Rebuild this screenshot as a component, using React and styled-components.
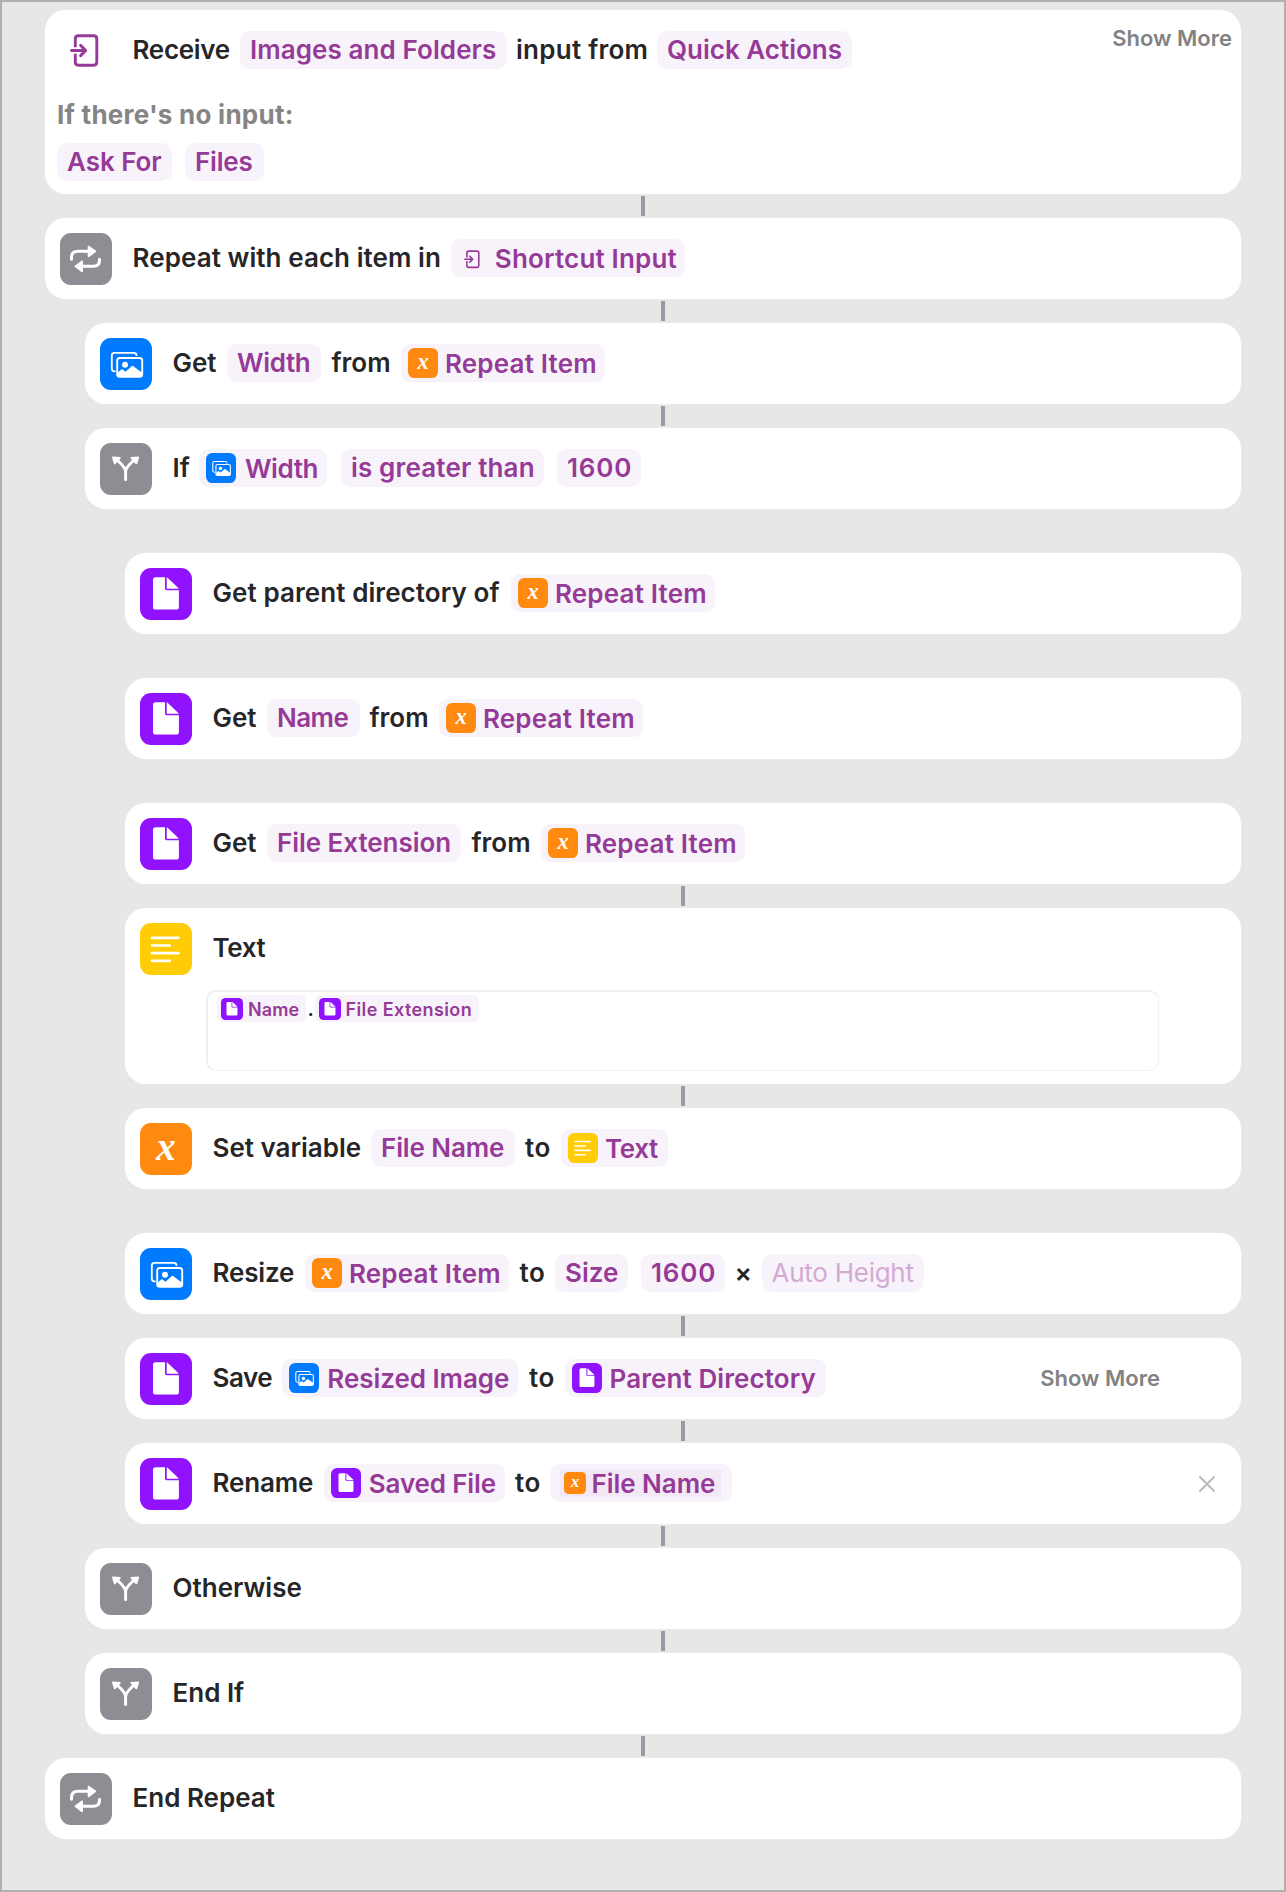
import React from 'react';
import styled, { createGlobalStyle, css } from 'styled-components';

const GlobalStyle = createGlobalStyle`
  *, *::before, *::after { box-sizing: border-box; }
  body { margin: 0; background: #e8e7e5; font-family: Inter, "Liberation Sans", sans-serif; }
`;

const Frame = styled.main`
  width: 1286px;
  height: 1892px;
  border: 2px solid #b1b0ae;
  background: #e8e7e5;
  padding: 8px 43px 0;
  display: flex;
  flex-direction: column;
  overflow: hidden;
`;

const Card = styled.section`
  flex: none;
  height: ${(p) => p.$h || 81}px;
  margin-left: ${(p) => p.$level * 40}px;
  background: #fff;
  border-radius: 21px;
  box-shadow: 0 0 0 1px rgba(255, 255, 255, 0.2), 0 1px 12px rgba(0, 0, 0, 0.015);
`;

const Gap = styled.div`
  flex: none;
  height: ${(p) => (p.$line ? 24 : 44)}px;
  margin-left: ${(p) => p.$level * 40}px;
  display: flex;
  justify-content: center;
  align-items: center;
`;

const Line = styled.span`
  width: 4px;
  height: 20px;
  background: #9a9ba2;
  z-index: 1;
`;

const Header = styled.div`
  display: flex;
  align-items: flex-start;
  height: 81px;
  padding-left: 15px;
`;

const tileColors = {
  gray: '#8e8d93',
  blue: '#007aff',
  purple: '#9012ff',
  yellow: '#ffcc05',
  orange: '#ff8a0f',
};

const Tile = styled.span`
  flex: none;
  display: flex;
  justify-content: center;
  align-items: center;
  width: ${(p) => p.$size}px;
  height: ${(p) => p.$size}px;
  border-radius: ${(p) => p.$size * 0.21}px;
  background: ${(p) => tileColors[p.$color] || 'none'};
  svg { display: block; }
`;

const LeadTile = styled.div`
  flex: none;
  width: 72px;
  padding-top: 15px;
`;

const InputBox = styled.div`
  width: 52px;
  height: 52px;
  padding: 9px 0 0 10px;
`;

const XGlyph = styled.span`
  font: italic 700 ${(p) => p.$size * 0.75}px/1 "Liberation Serif", serif;
  color: #fff;
  height: ${(p) => p.$size}px;
  line-height: ${(p) => p.$size * 0.92}px;
`;

const Phrase = styled.div`
  display: flex;
  align-items: flex-start;
  padding-top: 21px;
`;

const Word = styled.span`
  flex: none;
  width: ${(p) => p.$w}px;
  padding-left: ${(p) => (p.$pad || 0) + 0.5}px;
  font-size: 26px;
  line-height: 38px;
  font-weight: 600;
  letter-spacing: ${(p) => p.$ls || 0}px;
  color: #262628;
  white-space: nowrap;
`;

const chipText = css`
  font-size: 26px;
  line-height: 38px;
  font-weight: 600;
  letter-spacing: ${(p) => p.$ls || 0}px;
  color: #963a97;
  white-space: nowrap;
`;

const Chip = styled.span`
  flex: none;
  width: ${(p) => p.$w}px;
  height: 38px;
  margin-left: ${(p) => p.$ml || 0}px;
  padding-left: 10px;
  border-radius: 10px;
  background: #f8f3fa;
  ${chipText}
  ${(p) => p.$placeholder && css`color: #d3aad4; font-weight: 400;`}
`;

const VarChip = styled.span`
  flex: none;
  display: flex;
  align-items: flex-start;
  width: ${(p) => p.$w}px;
  height: 37.5px;
  padding: 4px 0 0 ${(p) => p.$pl || 7}px;
  border-radius: 9px;
  background: #f8f3fa;
`;

const VarText = styled.span`
  margin: -3px 0 0 ${(p) => p.$gap || 7}px;
  ${chipText}
`;

const MiniInput = styled.span`
  flex: none;
  width: 16px;
  padding-top: 7px;
  svg { display: block; }
`;

const Selected = styled.span`
  display: flex;
  align-items: center;
  width: 161px;
  height: 28px;
  margin: 5px 0 0;
  padding-left: 4px;
  border-radius: 2px;
  background: #f3e9f6;
`;

const SelectedText = styled.span`
  margin: 1px 0 0 5.5px;
  ${chipText}
  line-height: 28px;
`;

const ShowMore = styled.span`
  margin: ${(p) => p.$top}px ${(p) => p.$right}px 0 auto;
  font-size: 22px;
  line-height: 26px;
  font-weight: 600;
  color: #828282;
`;

const Close = styled.span`
  margin: 33px 26px 0 auto;
  svg { display: block; }
`;

const Question = styled.div`
  height: 47px;
  padding-left: 12px;
  font-size: 26px;
  font-weight: 700;
  line-height: 48px;
  letter-spacing: 0.25px;
  color: #858585;
`;

const Answers = styled.div`
  display: flex;
  padding: 5px 0 0 12px;
`;

const TextArea = styled.div`
  display: flex;
  align-items: flex-start;
  width: 953px;
  height: 81px;
  margin: 1px 0 0 81px;
  padding: 3px 0 0 9px;
  border: solid #f0f0f0;
  border-width: 2px 1px 1px 2px;
  border-radius: 10px;
`;

const SmallChip = styled.span`
  flex: none;
  display: flex;
  width: ${(p) => p.$w}px;
  height: 26.5px;
  padding: 3px 0 0 4px;
  border-radius: 6px;
  background: #f8f3fa;
`;

const SmallText = styled.span`
  margin: -1px 0 0 ${(p) => p.$gap}px;
  font-size: 18px;
  line-height: 25px;
  font-weight: 600;
  letter-spacing: ${(p) => p.$ls}px;
  color: #963a97;
  white-space: nowrap;
`;

const Dot = styled.span`
  width: 9px;
  padding-left: 1.5px;
  font-size: 20px;
  line-height: 29px;
  font-weight: 600;
  color: #262628;
`;

function InputGlyph({ w, h }) {
  return (
    <svg width={w} height={h} viewBox="0 0 29 33" fill="none" stroke="#963a97" strokeWidth="2.9" strokeLinecap="round" strokeLinejoin="round">
      <path strokeLinecap="butt" d="M5.3 13.2V5Q5.3 1.8 8.3 1.8H23.7Q26.8 1.8 26.8 5V28Q26.8 31.2 23.7 31.2H8.3Q5.3 31.2 5.3 28V19.8" />
      <path d="M1.5 16.5H15.5M10.6 11.4L15.7 16.5L10.6 21.6" />
    </svg>
  );
}

const glyphs = {
  repeat: (
    <>
      <g fill="none" stroke="#fff" strokeWidth="3" strokeLinecap="round">
        <path d="M11.5 26.2V24.5Q11.5 18.3 17.8 18.3H29" />
        <path d="M39.5 26.2V27.2Q39.5 33.3 33.2 33.3H22" />
      </g>
      <path d="M28.7 13.7L35.2 18.3L28.7 23.1ZM22 28.6L15.6 33.3L22 38.1Z" fill="#fff" stroke="#fff" strokeWidth="2" strokeLinejoin="round" />
    </>
  ),
  branch: (
    <>
      <path d="M25.6 36.5V28.5C25.6 24.2 20.5 20.5 17 16.8M25.6 28.5C25.6 24.2 30.7 20.5 34.2 16.8" fill="none" stroke="#fff" strokeWidth="3" strokeLinecap="round" />
      <path d="M13 14.4L19.8 14.8L14.8 20.4ZM38.2 14.4L31.4 14.8L36.4 20.4Z" fill="#fff" stroke="#fff" strokeWidth="1.8" strokeLinejoin="round" />
    </>
  ),
  photos: (
    <>
      <path d="M14.8 33.3H14.3Q11.8 33.3 11.8 30.5V17.5Q11.8 14.8 14.5 14.8H33.6Q36.4 14.8 36.5 17.2" fill="none" stroke="#fff" strokeWidth="1.8" strokeLinecap="round" />
      <rect x="17.2" y="20" width="25" height="18.9" rx="2.6" fill="none" stroke="#fff" strokeWidth="1.9" />
      <circle cx="25" cy="26.7" r="3" fill="#fff" />
      <path d="M17.2 35L21.3 31.5Q22 31 22.7 31.5L25.5 33.8L31.6 28.2Q32.5 27.5 33.4 28.2L42.2 34.8V37Q42.2 38.9 40 38.9H19.4Q17.2 38.9 17.2 37Z" fill="#fff" />
    </>
  ),
  doc: (
    <>
      <path d="M15.7 9.2H25V20.6Q25 22.3 26.7 22.3H38.9V38.9Q38.9 41.6 36.2 41.6H15.7Q13 41.6 13 38.9V11.9Q13 9.2 15.7 9.2Z" fill="#fff" />
      <path d="M26.7 9.3Q27.5 9.6 28.1 10.3L37.8 19.4Q38.5 20.1 38.7 20.8H27.3Q26.7 20.8 26.7 20.2Z" fill="#fff" />
    </>
  ),
  text: (
    <path d="M12 14.8H38.4M12 22.5H29.8M12 30.1H38.4M12 37.8H29.8" stroke="#fff" strokeWidth="2.7" strokeLinecap="round" />
  ),
};

const glyphColors = { repeat: 'gray', branch: 'gray', photos: 'blue', doc: 'purple', text: 'yellow', x: 'orange' };

function Icon({ name, size = 52 }) {
  return (
    <Tile $size={size} $color={glyphColors[name]}>
      {name === 'x' ? (
        <XGlyph $size={size}>x</XGlyph>
      ) : (
        <svg width={size} height={size} viewBox="0 0 52 52">{glyphs[name]}</svg>
      )}
    </Tile>
  );
}

function Variable({ icon, w, ls, gap, children }) {
  return (
    <VarChip $w={w}>
      <Icon name={icon} size={30} />
      <VarText $ls={ls} $gap={gap}>{children}</VarText>
    </VarChip>
  );
}

const RepeatItem = () => <Variable icon="x" w={204} ls={0.18}>Repeat Item</Variable>;

function Action({ icon, level, h, extra, below, children }) {
  return (
    <Card $level={level} $h={h}>
      <Header>
        <LeadTile><Icon name={icon} /></LeadTile>
        <Phrase>{children}</Phrase>
        {extra}
      </Header>
      {below}
    </Card>
  );
}

const Link = ({ level }) => <Gap $line $level={level}><Line /></Gap>;

export default function App() {
  return (
    <>
      <GlobalStyle />
      <Frame>
        <Card $level={0} $h={184}>
          <Header>
            <LeadTile><InputBox><InputGlyph w={29} h={33} /></InputBox></LeadTile>
            <Phrase>
              <Word $w={108} $ls={-0.3}>Receive</Word>
              <Chip $w={266.5} $ls={0.08}>Images and Folders</Chip>
              <Word $w={150.5} $pad={9} $ls={0.26}>input from</Word>
              <Chip $w={194.8}>Quick Actions</Chip>
            </Phrase>
            <ShowMore $top={15} $right={9}>Show More</ShowMore>
          </Header>
          <Question>If there's no input:</Question>
          <Answers>
            <Chip $w={115} $ls={-0.05}>Ask For</Chip>
            <Chip $w={78.5} $ml={13} $ls={-0.2}>Files</Chip>
          </Answers>
        </Card>
        <Link level={0} />
        <Action icon="repeat" level={0}>
          <Word $w={319} $ls={0.07}>Repeat with each item in</Word>
          <VarChip $w={234.3} $pl={13}>
            <MiniInput><InputGlyph w={16} h={18.5} /></MiniInput>
            <VarText $gap={14.8} $ls={0.18}>Shortcut Input</VarText>
          </VarChip>
        </Action>
        <Link level={1} />
        <Action icon="photos" level={1}>
          <Word $w={55}>Get</Word>
          <Chip $w={94} $ls={-0.35}>Width</Chip>
          <Word $w={80} $pad={10}>from</Word>
          <RepeatItem />
        </Action>
        <Link level={1} />
        <Action icon="branch" level={1}>
          <Word $w={27}>If</Word>
          <Variable icon="photos" w={128} ls={-0.4} gap={9}>Width</Variable>
          <Chip $w={203} $ml={14} $ls={0.16}>is greater than</Chip>
          <Chip $w={84} $ml={13} $ls={0.8}>1600</Chip>
        </Action>
        <Gap />
        <Action icon="doc" level={2}>
          <Word $w={299} $ls={0.08}>Get parent directory of</Word>
          <RepeatItem />
        </Action>
        <Gap />
        <Action icon="doc" level={2}>
          <Word $w={55}>Get</Word>
          <Chip $w={92.5} $ls={-0.55}>Name</Chip>
          <Word $w={79.5} $pad={9.5}>from</Word>
          <RepeatItem />
        </Action>
        <Gap />
        <Action icon="doc" level={2}>
          <Word $w={55}>Get</Word>
          <Chip $w={194} $ls={-0.05}>File Extension</Chip>
          <Word $w={80} $pad={10}>from</Word>
          <RepeatItem />
        </Action>
        <Link level={2} />
        <Action
          icon="text"
          level={2}
          h={176}
          below={
            <TextArea>
              <SmallChip $w={89}>
                <Icon name="doc" size={22} />
                <SmallText $gap={5} $ls={0.1}>Name</SmallText>
              </SmallChip>
              <Dot>.</Dot>
              <SmallChip $w={164}>
                <Icon name="doc" size={22} />
                <SmallText $gap={4.5} $ls={0.4}>File Extension</SmallText>
              </SmallChip>
            </TextArea>
          }
        >
          <Word $w={60} $ls={-0.39}>Text</Word>
        </Action>
        <Link level={2} />
        <Action icon="x" level={2}>
          <Word $w={159}>Set variable</Word>
          <Chip $w={144} $ls={-0.11}>File Name</Chip>
          <Word $w={46} $pad={9.5} $ls={0.5}>to</Word>
          <Variable icon="text" w={106.5} ls={-0.39}>Text</Variable>
        </Action>
        <Gap />
        <Action icon="photos" level={2}>
          <Word $w={93} $ls={-0.17}>Resize</Word>
          <RepeatItem />
          <Word $w={46} $pad={10} $ls={0.5}>to</Word>
          <Chip $w={73}>Size</Chip>
          <Chip $w={83.5} $ml={13} $ls={0.8}>1600</Chip>
          <Word $w={37} $pad={9.5}>×</Word>
          <Chip $w={162.5} $ls={-0.26} $placeholder>Auto Height</Chip>
        </Action>
        <Link level={2} />
        <Action icon="doc" level={2} extra={<ShowMore $top={27} $right={81}>Show More</ShowMore>}>
          <Word $w={70} $ls={-0.5}>Save</Word>
          <Variable icon="photos" w={236} ls={-0.05} gap={8.3}>Resized Image</Variable>
          <Word $w={47} $pad={10.5} $ls={0.5}>to</Word>
          <Variable icon="doc" w={260.5} ls={0.1} gap={7.5}>Parent Directory</Variable>
        </Action>
        <Link level={2} />
        <Action
          icon="doc"
          level={2}
          extra={
            <Close>
              <svg width="16" height="16" viewBox="0 0 16 16" stroke="#b9b9b9" strokeWidth="1.9" strokeLinecap="round">
                <path d="M1 1L15 15M15 1L1 15" />
              </svg>
            </Close>
          }
        >
          <Word $w={111.5} $ls={-0.15}>Rename</Word>
          <Variable icon="doc" w={181} ls={-0.15} gap={8.3}>Saved File</Variable>
          <Word $w={45.5} $pad={10} $ls={0.5}>to</Word>
          <Chip $w={182}>
            <Selected>
              <Icon name="x" size={22} />
              <SelectedText $ls={-0.05}>File Name</SelectedText>
            </Selected>
          </Chip>
        </Action>
        <Link level={1} />
        <Action icon="branch" level={1}><Word $w={140}>Otherwise</Word></Action>
        <Link level={1} />
        <Action icon="branch" level={1}><Word $w={90}>End If</Word></Action>
        <Link level={0} />
        <Action icon="repeat" level={0}><Word $w={160}>End Repeat</Word></Action>
      </Frame>
    </>
  );
}
